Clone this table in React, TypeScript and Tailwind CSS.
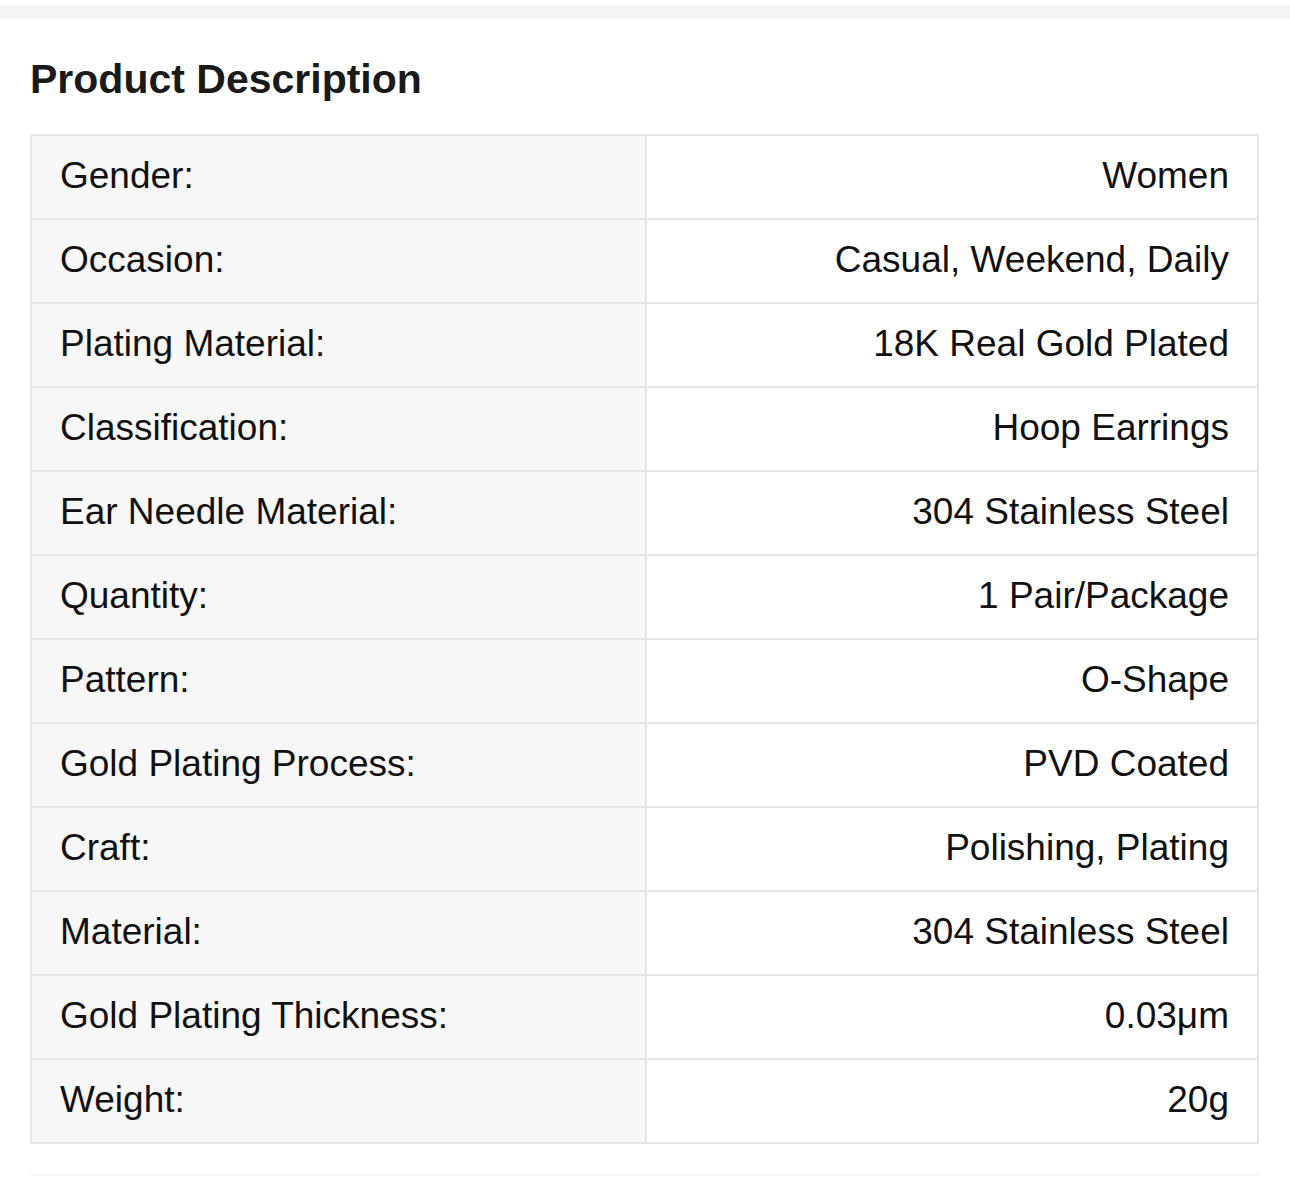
const rows: [string, string][] = [
  ["Gender:", "Women"],
  ["Occasion:", "Casual, Weekend, Daily"],
  ["Plating Material:", "18K Real Gold Plated"],
  ["Classification:", "Hoop Earrings"],
  ["Ear Needle Material:", "304 Stainless Steel"],
  ["Quantity:", "1 Pair/Package"],
  ["Pattern:", "O-Shape"],
  ["Gold Plating Process:", "PVD Coated"],
  ["Craft:", "Polishing, Plating"],
  ["Material:", "304 Stainless Steel"],
  ["Gold Plating Thickness:", "0.03μm"],
  ["Weight:", "20g"],
];

export default function App() {
  return (
    <div className="min-h-[1187px] bg-white font-['Liberation_Sans',Arial,sans-serif] text-[#111]">
      <div className="h-[5px]" />
      <div className="h-[14px] bg-[#f5f5f5]" />
      <div className="px-[30px] pr-[31px]">
        <h2 className="pt-[36px] pb-[31px] text-[41px] leading-[48px] font-semibold text-[#1a1a1a]">Product Description</h2>
        <table className="w-full border-collapse border-2 border-[#e6e6e6] text-[37px]">
          <tbody>
            {rows.map(([label, value]) => (
              <tr key={label} className="h-[84px]">
                <td className="w-[615px] border-2 border-[#e6e6e6] bg-[#f7f7f7] pb-[3px] pl-[28px]">{label}</td>
                <td className="border-2 border-[#e6e6e6] pb-[3px] pr-[28px] text-right">{value}</td>
              </tr>
            ))}
          </tbody>
        </table>
        <div className="mt-[30px] h-[2px] bg-[#f5f5f5]" />
      </div>
    </div>
  );
}
